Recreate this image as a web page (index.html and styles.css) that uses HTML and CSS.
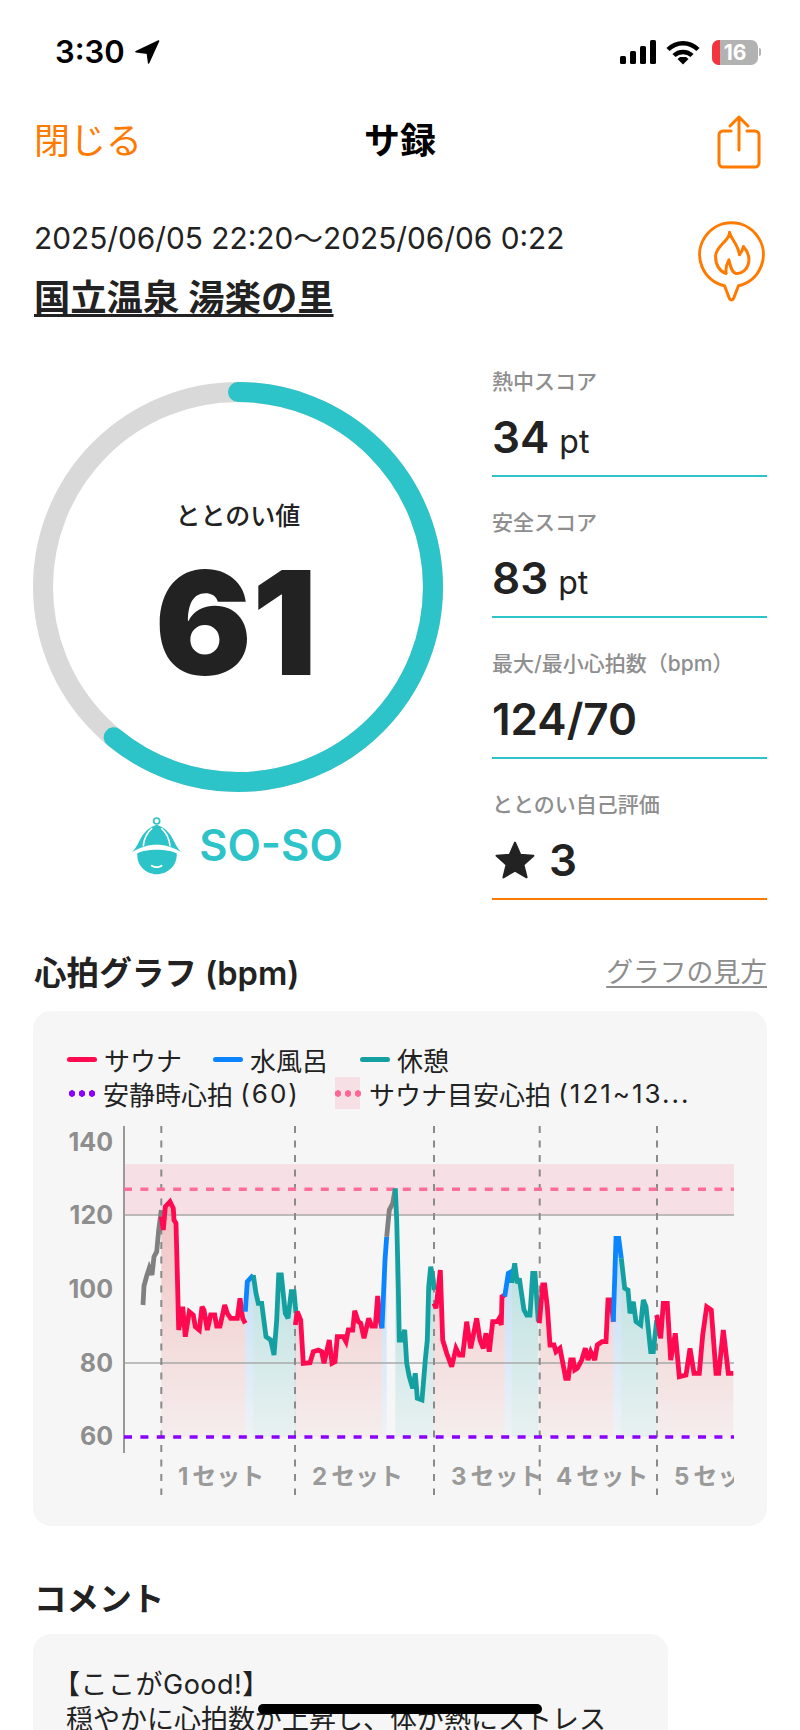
FILE: index.html
```html
<!DOCTYPE html>
<html lang="ja">
<head>
    <meta charset="UTF-8">
    <meta name="viewport" content="width=device-width, initial-scale=1.0">
    <title>サ録</title>
    <link rel="stylesheet" href="styles.css">
</head>
<body>
<div class="page">
    <div class="status-bar">
        <div class="status-left">
            <span class="time">3:30</span>
            <svg class="location" viewBox="131 39 27 26"><polygon points="155.6,41 133,51.7 144.4,53.3 145.6,63" /></svg>
        </div>
        <div class="status-right">
            <svg class="signal" viewBox="0 0 36 24">
                <rect x="0" y="16" width="6" height="8" rx="1.5" />
                <rect x="10" y="11" width="6" height="13" rx="1.5" />
                <rect x="20" y="6" width="6" height="18" rx="1.5" />
                <rect x="30" y="0" width="6" height="24" rx="1.5" />
            </svg>
            <svg class="wifi" viewBox="0 0 34 25">
                <path class="wifi-arc" d="M2 9.5C10.5 1 23.500 1 32 9.500" />
                <path class="wifi-arc" d="M8 15.500C13 10.700 21 10.700 26 15.500" />
                <polygon points="17,24.500 11.500,19 14,17 20,17 22.500,19" />
            </svg>
            <div class="battery">
                <div class="battery-low"></div>
                <span class="battery-num">16</span>
            </div>
            <div class="battery-nub"></div>
        </div>
    </div>

    <div class="nav">
        <span class="nav-close">閉じる</span>
        <span class="nav-title">サ録</span>
        <svg class="share-icon" viewBox="0 0 46 56">
            <path d="M15 17H7a4 4 0 0 0-4 4v28a4 4 0 0 0 4 4h32a4 4 0 0 0 4-4V21a4 4 0 0 0-4-4h-8" />
            <path d="M23 36V3M14 12l9-9 9 9" />
        </svg>
    </div>

    <div class="info">
        <div class="info-text">
            <div class="info-date">2025/06/05 22:20～2025/06/06 0:22</div>
            <div class="info-place">国立温泉 湯楽の里</div>
        </div>
        <svg class="fire-icon" viewBox="50 355 215 250">
            <path d="M135 553A96 96 0 1 1 177 553L162 592Q156 600 150 592Z" />
            <path d="M150 392C155 415 175 425 180 460C186 452 190 444 192 435C205 450 210 465 208 480C205 505 185 518 170 516C160 515 155 505 148 475C140 490 138 505 140 516C120 510 108 490 108 465C108 445 125 432 135 420C145 410 150 400 150 392Z" />
        </svg>
    </div>

    <div class="score">
        <div class="score-left">
            <div class="ring">
                <svg class="ring-svg" viewBox="0 0 410 410">
                    <circle class="ring-bg" cx="205" cy="205" r="195" />
                    <circle class="ring-value" cx="205" cy="205" r="195" pathLength="100" stroke-dasharray="61 100" transform="rotate(-90 205 205)" />
                </svg>
                <div class="ring-text">
                    <div class="ring-label">ととのい値</div>
                    <div class="ring-number">61</div>
                </div>
            </div>
            <div class="mood">
                <svg class="mood-icon" viewBox="60 45 165 180">
                    <circle class="mood-ring" cx="143" cy="63" r="9" />
                    <path d="M68 156C92 140 92 90 143 74C194 90 194 140 218 156C192 142 170 134 143 134C116 134 94 142 68 156Z" />
                    <path d="M85 160C112 146 174 146 203 160C206 196 176 223 143 223C110 223 82 196 85 160Z" />
                    <path class="mood-seam" d="M103 137C106 112 116 96 128 86M183 137C180 112 170 96 158 86" />
                    <path class="mood-seam" d="M128 197Q143 206 158 197" />
                </svg>
                <span class="mood-text">SO-SO</span>
            </div>
        </div>
        <div class="stats">
            <div class="stat">
                <div class="stat-label">熱中スコア</div>
                <div class="stat-value">34 <span class="stat-unit">pt</span></div>
            </div>
            <div class="stat">
                <div class="stat-label">安全スコア</div>
                <div class="stat-value">83 <span class="stat-unit">pt</span></div>
            </div>
            <div class="stat">
                <div class="stat-label">最大/最小心拍数（bpm）</div>
                <div class="stat-value">124/70</div>
            </div>
            <div class="stat stat-self">
                <div class="stat-label">ととのい自己評価</div>
                <div class="stat-value">
                    <svg class="star" viewBox="0 0 40 38"><polygon points="20,2.500 25,14 37.500,15 28,23.500 31,35.500 20,29 9,35.500 12,23.500 2.500,15 15,14" /></svg>
                    3
                </div>
            </div>
        </div>
    </div>

    <div class="section-head">
        <span class="section-title">心拍グラフ (bpm)</span>
        <span class="section-link">グラフの見方</span>
    </div>

    <div class="graph-card">
        <div class="legend">
            <div class="legend-row">
                <span class="legend-item legend-first"><i class="swatch swatch-sauna"></i>サウナ</span>
                <span class="legend-item legend-second"><i class="swatch swatch-water"></i>水風呂</span>
                <span class="legend-item"><i class="swatch swatch-rest"></i>休憩</span>
            </div>
            <div class="legend-row">
                <span class="legend-item legend-calm"><i class="dots dots-calm"></i>安静時心拍&nbsp;<span class="legend-num">(60)</span></span>
                <span class="legend-item"><i class="dots dots-target"></i>サウナ目安心拍&nbsp;<span class="legend-num">(121~13...</span></span>
            </div>
        </div>
        <svg class="graph" viewBox="33 1110 734 416">
            <defs>
                <linearGradient id="fill-sauna" gradientUnits="userSpaceOnUse" x1="0" y1="1200" x2="0" y2="1437">
                    <stop offset="0" stop-color="#e64646" stop-opacity="0.3" />
                    <stop offset="1" stop-color="#e64646" stop-opacity="0.05" />
                </linearGradient>
                <linearGradient id="fill-water" gradientUnits="userSpaceOnUse" x1="0" y1="1240" x2="0" y2="1437">
                    <stop offset="0" stop-color="#0a84ff" stop-opacity="0.24" />
                    <stop offset="1" stop-color="#0a84ff" stop-opacity="0.03" />
                </linearGradient>
                <linearGradient id="fill-rest" gradientUnits="userSpaceOnUse" x1="0" y1="1240" x2="0" y2="1437">
                    <stop offset="0" stop-color="#14a0a0" stop-opacity="0.28" />
                    <stop offset="1" stop-color="#14a0a0" stop-opacity="0.06" />
                </linearGradient>
                <clipPath id="plot-clip"><rect x="124" y="1110" width="610" height="416" /></clipPath>
            </defs>
            <rect class="band" x="124" y="1164" width="610" height="51" />
            <g id="graph-fills"></g>
            <line class="grid" x1="124" y1="1215" x2="734" y2="1215" />
            <line class="grid" x1="124" y1="1363" x2="734" y2="1363" />
            <line class="axis" x1="124" y1="1126" x2="124" y2="1453" />
            <line class="set-line" x1="161.300" y1="1126" x2="161.300" y2="1495" />
            <line class="set-line" x1="295" y1="1126" x2="295" y2="1495" />
            <line class="set-line" x1="434" y1="1126" x2="434" y2="1495" />
            <line class="set-line" x1="539.700" y1="1126" x2="539.700" y2="1495" />
            <line class="set-line" x1="657" y1="1126" x2="657" y2="1495" />
            <line class="limit limit-target" x1="124" y1="1189.300" x2="734" y2="1189.300" />
            <line class="limit limit-calm" x1="124" y1="1437" x2="734" y2="1437" />
            <g id="graph-lines"></g>
            <text class="tick" x="113" y="1151">140</text>
            <text class="tick" x="113" y="1224">120</text>
            <text class="tick" x="113" y="1298">100</text>
            <text class="tick" x="113" y="1372">80</text>
            <text class="tick" x="113" y="1445">60</text>
            <g clip-path="url(#plot-clip)">
                <text class="set-name" x="178" y="1485">1<tspan dx="4">セット</tspan></text>
                <text class="set-name" x="312" y="1485">2<tspan dx="4">セット</tspan></text>
                <text class="set-name" x="451" y="1485">3<tspan dx="4">セット</tspan></text>
                <text class="set-name" x="556" y="1485">4<tspan dx="4">セット</tspan></text>
                <text class="set-name" x="674" y="1485">5<tspan dx="4">セット</tspan></text>
            </g>
        </svg>
    </div>

    <div class="section-head section-head-comment">
        <span class="section-title">コメント</span>
    </div>
    <div class="comment-card">
        <div class="comment-first">【ここがGood!】</div>
        <div>穏やかに心拍数が上昇し、体が熱にストレス</div>
    </div>

    <div class="home-bar"></div>
</div>
<script src="chart.js"></script>
</body>
</html>
```

FILE: styles.css
```css
body {
    margin: 0;
    background: white;
    font-family: Inter, "Noto Sans CJK JP", sans-serif;
    color: #222;
}

.page {
    position: relative;
    width: 800px;
    height: 1730px;
    overflow: hidden;
}

/* status bar */
.status-bar {
    height: 104px;
    padding: 0 39px 0 55px;
    display: flex;
    justify-content: space-between;
    align-items: center;
    color: black;
}

.status-left, .status-right {
    display: flex;
    align-items: center;
}

.time {
    font-size: 31px;
    font-weight: 600;
    line-height: 36px;
}

.location {
    width: 27px;
    height: 26px;
    margin-left: 9px;
}

.location polygon {
    fill: black;
    stroke: black;
    stroke-width: 1.5;
    stroke-linejoin: round;
}

.signal {
    width: 36px;
    height: 24px;
}

.wifi {
    width: 34px;
    height: 25px;
    margin-left: 10px;
}

.wifi-arc {
    fill: none;
    stroke: black;
    stroke-width: 4.5;
}

.battery {
    position: relative;
    width: 46px;
    height: 25px;
    margin-left: 12px;
    background: #b2b2b2;
    border-radius: 7px;
    overflow: hidden;
    display: flex;
    align-items: center;
    justify-content: center;
}

.battery-low {
    position: absolute;
    left: 0;
    top: 0;
    bottom: 0;
    width: 8px;
    background: #f5333f;
}

.battery-num {
    position: relative;
    color: white;
    font-size: 21px;
    font-weight: 700;
    line-height: 25px;
}

.battery-nub {
    width: 2px;
    height: 8px;
    margin-left: 1px;
    background: #b2b2b2;
    border-radius: 0 2px 2px 0;
}

/* nav */
.nav {
    height: 72px;
    box-sizing: border-box;
    padding: 0 38px 5px 34px;
    display: flex;
    justify-content: space-between;
    align-items: center;
    position: relative;
}

.nav-close {
    font-size: 36px;
    color: #ff7a00;
}

.nav-title {
    position: absolute;
    left: 0;
    right: 0;
    text-align: center;
    font-size: 36px;
    font-weight: 700;
    color: black;
    pointer-events: none;
}

.share-icon {
    width: 46px;
    height: 56px;
    margin-top: 9px;
    fill: none;
    stroke: #ff7a00;
    stroke-width: 3;
    stroke-linecap: round;
    stroke-linejoin: round;
}

/* date and place */
.info {
    padding: 42px 32px 0 34px;
    display: flex;
    justify-content: space-between;
    align-items: flex-start;
}

.info-date {
    font-size: 29.800px;
    line-height: 40px;
}

.info-place {
    margin-top: 18px;
    font-size: 36.300px;
    font-weight: 600;
    line-height: 44px;
    text-decoration: underline;
    text-decoration-thickness: 3px;
    text-underline-offset: 3px;
}

.fire-icon {
    width: 72px;
    height: 83px;
    margin-top: 2px;
    fill: none;
    stroke: #ff7a00;
    stroke-width: 9;
    stroke-linejoin: round;
}

/* score */
.score {
    margin-top: 45px;
    padding: 0 33px;
    display: flex;
    justify-content: space-between;
}

.score-left {
    padding-top: 17px;
    display: flex;
    flex-direction: column;
    align-items: center;
}

.ring {
    position: relative;
    width: 410px;
    height: 410px;
}

.ring-svg {
    display: block;
}

.ring-bg, .ring-value {
    fill: none;
    stroke-width: 20;
}

.ring-bg {
    stroke: #d9d9d9;
}

.ring-value {
    stroke: #2cc3c9;
    stroke-linecap: round;
}

.ring-text {
    position: absolute;
    top: 0;
    left: 0;
    width: 100%;
    text-align: center;
}

.ring-label {
    margin-top: 114px;
    font-size: 25px;
    font-weight: 500;
    line-height: 40px;
}

.ring-number {
    margin-top: 12px;
    margin-left: -4px;
    font-size: 144px;
    font-weight: 900;
    line-height: 150px;
}

.mood {
    margin-top: 23px;
    margin-left: -4px;
    display: flex;
    align-items: center;
    gap: 15px;
}

.mood-icon {
    width: 55px;
    height: 60px;
}

.mood-icon path {
    fill: #2cc3c9;
}

.mood-icon .mood-seam {
    fill: none;
    stroke: white;
    stroke-width: 5;
    stroke-linecap: round;
}

.mood-icon .mood-ring {
    fill: none;
    stroke: #2cc3c9;
    stroke-width: 5;
}

.mood-text {
    font-size: 43.500px;
    font-weight: 600;
    color: #2cc3c9;
}

.stats {
    width: 275px;
    margin-top: -2px;
    display: flex;
    flex-direction: column;
    gap: 27px;
}

.stat {
    height: 114px;
    box-sizing: border-box;
    border-bottom: 2px solid #2cc3c9;
}

.stat-self {
    border-bottom-color: #ff7a00;
}

.stat-label {
    font-size: 21px;
    font-weight: 500;
    line-height: 38px;
    color: #8e8e8e;
}

.stat-value {
    display: flex;
    align-items: baseline;
    gap: 10px;
    margin-top: 6px;
    font-size: 44px;
    font-weight: 600;
    line-height: 60px;
}

.stat-unit {
    font-size: 32px;
    font-weight: 400;
}

.star {
    width: 42px;
    height: 40px;
    align-self: center;
    margin-left: 2px;
    margin-right: 3px;
}

.star polygon {
    fill: #222;
    stroke: #222;
    stroke-width: 2;
    stroke-linejoin: round;
}

/* sections */
.section-head {
    margin-top: 48px;
    padding: 0 33px 0 34px;
    height: 44px;
    display: flex;
    justify-content: space-between;
    align-items: center;
}

.section-title {
    font-size: 32.600px;
    font-weight: 600;
}

.section-link {
    font-size: 26.800px;
    color: #8e8e8e;
    text-decoration: underline;
    text-underline-offset: 4px;
}

.graph-card {
    margin: 19px 33px 0;
    height: 515px;
    background: #f6f6f6;
    border-radius: 18px;
    overflow: hidden;
}

.legend {
    padding: 31px 0 0 34px;
    height: 68px;
    font-size: 26px;
}

.legend-row {
    display: flex;
    height: 34px;
    align-items: center;
}

.legend-item {
    display: flex;
    align-items: center;
    white-space: nowrap;
}

.legend-num {
    letter-spacing: 2px;
}

.legend-first {
    width: 146px;
}

.legend-second {
    width: 147px;
}

.legend-calm {
    width: 266px;
}

.swatch {
    width: 30px;
    height: 5px;
    margin-right: 7px;
    border-radius: 3px;
}

.swatch-sauna {
    background: #ff0a50;
}

.swatch-water {
    background: #0a84ff;
}

.swatch-rest {
    background: #14a0a0;
}

.dots {
    position: relative;
    width: 30px;
    height: 7px;
    margin-right: 6px;
    background: radial-gradient(circle at center, var(--dot) 3px, transparent 3.500px) 0 0 / 10px 7px repeat-x;
}

.dots-calm {
    --dot: #8a00ff;
}

.dots-target {
    --dot: #ff6b9a;
}

.dots-target::before {
    content: "";
    position: absolute;
    left: 2px;
    right: 3px;
    top: -13px;
    height: 32px;
    background: rgba(255, 90, 130, 0.14);
}

.graph {
    display: block;
    width: 734px;
    height: 416px;
}

.band {
    fill: rgba(255, 90, 130, 0.14);
}

.grid {
    stroke: #a8a8a8;
    stroke-width: 1.500;
}

.axis {
    stroke: #999;
    stroke-width: 2;
}

.set-line {
    stroke: #8a8a8a;
    stroke-width: 2;
    stroke-dasharray: 7 7.500;
}

.limit {
    stroke-width: 3.500;
    stroke-dasharray: 8 8.400;
}

.limit-target {
    stroke: #ff6b9a;
}

.limit-calm {
    stroke: #8a00ff;
}

.hr-line {
    fill: none;
    stroke-width: 4.800;
    stroke-linejoin: miter;
    stroke-miterlimit: 3;
}

.tick {
    font-size: 25px;
    font-weight: 700;
    fill: #8e8e8e;
    text-anchor: end;
}

.set-name {
    font-size: 24px;
    font-weight: 700;
    fill: #9a9a9a;
}

.comment-card {
    margin: 16px 0 0 33px;
    width: 635px;
    min-height: 200px;
    box-sizing: border-box;
    padding: 33px 0 0 33px;
    background: #f6f6f6;
    border-radius: 18px;
    font-size: 27px;
    line-height: 35px;
}

.comment-first {
    margin-left: -13px;
    letter-spacing: 0.500px;
}

.home-bar {
    position: absolute;
    left: 258px;
    top: 1704px;
    width: 284px;
    height: 10px;
    background: black;
    border-radius: 5px;
}
```

FILE: chart.js
```js
// heart rate trace, x/y are plot coordinates of the svg
const colors = { sauna: "#ff0a50", water: "#0a84ff", rest: "#14a0a0", idle: "#808080" };

const series = [
    ["idle", "143,1305 144,1286 146.700,1276 149.300,1268 152,1275 154,1256.700 156.700,1251.700 158.700,1230 161.300,1210"],
    ["sauna", "161.300,1216.700 163.300,1230 165.300,1206.700 170,1201.700 173.300,1208.300 174,1220 176,1223.300 177.300,1273.300 178.700,1330 182.700,1306.700 185.300,1336.700 189.300,1311.700 193.300,1315 195.300,1326.700 199.300,1330 202,1306.700 204,1310 207.300,1330 210.700,1315 214.700,1315 216.700,1326 220,1326 224.700,1305 227.300,1313.300 230.700,1318.300 237.300,1318.300 240,1298.300 242.700,1318.300 245.300,1323.300"],
    ["water", "245.300,1311.700 247.300,1281.700 253.300,1275"],
    ["rest", "253.300,1275 256,1293.300 258.300,1303.300 261.700,1303.300 266,1336.700 270.700,1340 274,1355 276.700,1320 278.700,1275 281.300,1275 285.300,1313.300 288,1318.300 291.300,1291.700 294,1291.700 296,1313.300"],
    ["sauna", "295.300,1325 297.300,1311.700 300.700,1320 303.300,1363.300 310,1362.700 313.300,1351.700 318.300,1350 321.700,1351.700 324,1363.300 329.300,1340 332,1363.300 335,1361.700 337.300,1336.700 343.300,1336.700 346,1341.700 348.300,1330 352.700,1330 354.700,1310.700 358.300,1321.700 360.700,1323.300 364,1338.300 368.700,1318.300 371.700,1326 375.300,1326 377.700,1296 380,1320 382,1328.300"],
    ["water", "382,1328.300 385,1260 386.700,1236.700"],
    ["idle", "386.700,1236.700 389.300,1210 392.700,1203.300 395.300,1188.300"],
    ["rest", "395.300,1188.300 396.700,1220 398.300,1286.700 399.300,1340 401.700,1340 404.700,1330 406.700,1363.300 409.300,1376.700 412.700,1388.300 415.300,1373.300 417.300,1398.300 422,1400 425.300,1360 427.300,1340 428.700,1286.700 430.700,1266.700 433.300,1280 434,1290"],
    ["sauna", "434,1303.300 436,1308.300 440.300,1270 442.700,1340 446.700,1353.300 451.700,1366.700 456,1348.300 459.300,1355 462.700,1355 466.700,1321.700 470.700,1348.300 476.700,1318.300 480,1340 483.300,1348.300 486,1333.300 489.300,1351.700 492.700,1321.700 497.300,1321.700 499.300,1318.300 501.300,1325 502,1296.700 504.700,1295"],
    ["water", "504.700,1296.700 508.300,1273.300 511.300,1271.700 511.700,1283"],
    ["rest", "511.700,1283 514.700,1263.300 517.300,1283.300 519.300,1278.300 524,1310 526.700,1315 530,1315 532.700,1273.300 535,1273.300 538.300,1321.700"],
    ["sauna", "539.300,1323.300 542.700,1285 544.700,1285 547.300,1306.700 550,1345 554,1345 556,1351.700 560,1348.300 565.700,1378.300 568.300,1378.300 570.700,1360 573.300,1360 574.700,1370 577.300,1368.300 581.700,1360 585.300,1348.300 588,1360 590.700,1351.700 594.700,1360 597.300,1345 602,1341.700 606,1341.700 608,1300 611.300,1300 613.300,1321.700"],
    ["water", "613.300,1321.700 616,1238.300 618.700,1238.300 621.300,1258.300"],
    ["rest", "621.300,1258.300 624.700,1288.300 628,1290 630,1313.300 633.300,1301.700 636,1321.700 640.700,1325 643.300,1300 646,1306.700 650.700,1351.700 653.300,1351.700 656.700,1320"],
    ["sauna", "656.700,1315 660.700,1338.300 663.300,1303.300 667.300,1303.300 670.700,1360 675.300,1333.300 679.300,1376.700 686,1375 690,1348.300 694,1373.300 699.300,1373.300 702.700,1335 706.700,1306.700 711.300,1310 716,1373.300 718.700,1373.300 723.300,1330 728.300,1373.300 733.300,1373.300"]
];

const svgNs = "http://www.w3.org/2000/svg";
const fills = document.getElementById("graph-fills");
const lines = document.getElementById("graph-lines");

for (const [kind, points] of series) {
    if (kind != "idle") {
        let list = points.split(" ");
        let first = list[0].split(",")[0];
        let last = list[list.length - 1].split(",")[0];
        let area = document.createElementNS(svgNs, "polygon");
        area.setAttribute("points", points + " " + last + ",1437 " + first + ",1437");
        area.setAttribute("fill", "url(#fill-" + kind + ")");
        fills.appendChild(area);
    }
    let line = document.createElementNS(svgNs, "polyline");
    line.setAttribute("points", points);
    line.setAttribute("class", "hr-line");
    line.setAttribute("stroke", colors[kind]);
    lines.appendChild(line);
}
```
